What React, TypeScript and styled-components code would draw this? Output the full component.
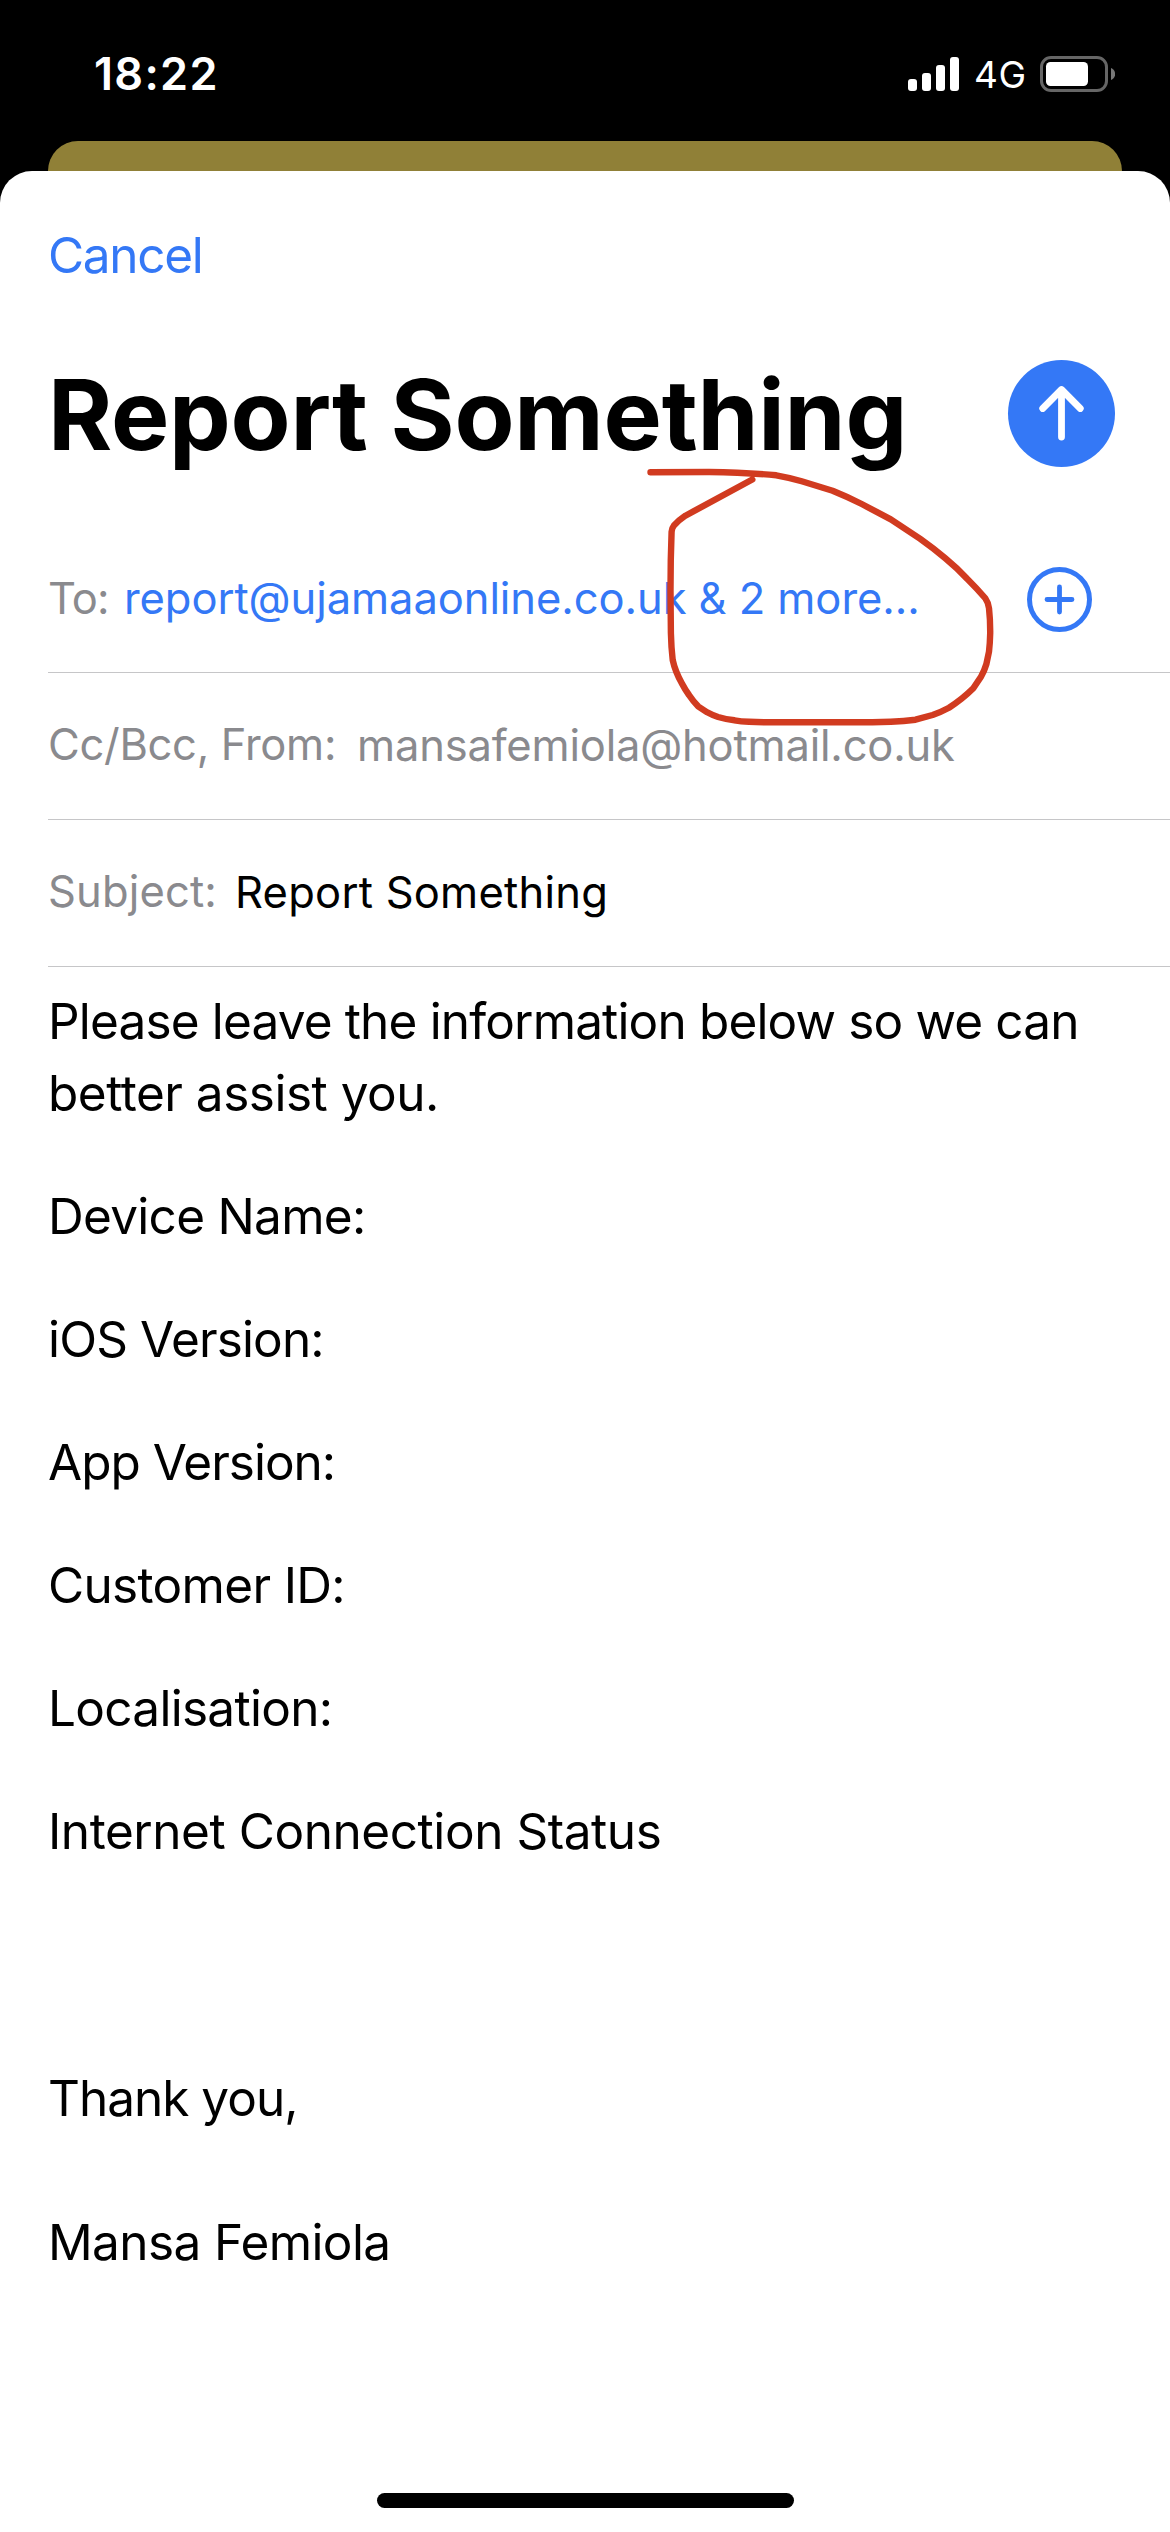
import React from "react";
import styled, { createGlobalStyle } from "styled-components";

const BLUE = "#3478f6";
const GREY = "#8a8a8e";

const GlobalStyle = createGlobalStyle`
  body {
    margin: 0;
    background: #000;
    font-family: Inter, "Liberation Sans", sans-serif;
    font-kerning: normal;
  }
  *, *::before, *::after { box-sizing: border-box; }
  p, h1 { margin: 0; }
`;

const Screen = styled.div`
  position: relative;
  display: flex;
  flex-direction: column;
  width: 1170px;
  height: 2532px;
  background: #000;
  overflow: hidden;
`;

const StatusBar = styled.header`
  display: flex;
  justify-content: space-between;
  align-items: flex-start;
  height: 141px;
  padding: 44px 55px 0 94px;
  color: #fff;
`;

const Clock = styled.time`
  font-size: 45px;
  font-weight: 600;
  line-height: 60px;
  letter-spacing: 1.3px;
`;

const Indicators = styled.div`
  display: flex;
  align-items: flex-start;
  padding-top: 12px;
`;

const Network = styled.span`
  width: 66px;
  margin-left: 15px;
  font-size: 37px;
  line-height: 37px;
  letter-spacing: 0.5px;
`;

const BackCard = styled.div`
  flex: none;
  height: 30px;
  margin: 0 48px;
  border-radius: 31px 31px 0 0;
  background: #908037;
`;

const Sheet = styled.main`
  flex: 1;
  display: flex;
  flex-direction: column;
  padding: 48px 0 0 48px;
  border-radius: 32px 32px 0 0;
  background: #fff;
`;

const CancelButton = styled.button`
  align-self: flex-start;
  padding: 0;
  border: 0;
  background: none;
  color: ${BLUE};
  font-family: inherit;
  font-size: 49.5px;
  line-height: 72px;
  letter-spacing: -1.3px;
`;

const TitleRow = styled.div`
  display: flex;
  justify-content: space-between;
  align-items: flex-start;
  height: 107px;
  margin: 69px 55px 59px 0;
`;

const Title = styled.h1`
  font-size: 98px;
  font-weight: 700;
  line-height: 109px;
  letter-spacing: -0.25px;
  white-space: nowrap;
`;

const RoundButton = styled.button<{ $size: number; $filled?: boolean }>`
  display: flex;
  flex: none;
  align-items: center;
  justify-content: center;
  width: ${(p) => p.$size}px;
  height: ${(p) => p.$size}px;
  padding: 0;
  border: ${(p) => (p.$filled ? "0" : `5px solid ${BLUE}`)};
  border-radius: 50%;
  background: ${(p) => (p.$filled ? BLUE : "transparent")};
  color: ${(p) => (p.$filled ? "#fff" : BLUE)};
`;

const FieldRow = styled.div`
  display: flex;
  align-items: flex-start;
  height: 147px;
  padding-right: 78px;
  border-bottom: 1px solid #c6c6c8;
  font-size: 43.5px;
  white-space: nowrap;
`;

const FieldLabel = styled.span<{ $width: number; $tracking: number; $line?: number }>`
  flex: none;
  width: ${(p) => p.$width}px;
  color: ${GREY};
  line-height: ${(p) => p.$line ?? 142}px;
  letter-spacing: ${(p) => p.$tracking}px;
`;

const FieldValue = styled.span<{ $color: string; $tracking: number }>`
  flex: 1;
  color: ${(p) => p.$color};
  line-height: 144px;
  letter-spacing: ${(p) => p.$tracking}px;
`;

const AddSlot = styled.div`
  display: flex;
  align-items: center;
  height: 147px;
`;

const MessageBody = styled.section`
  display: flex;
  flex-direction: column;
  padding-top: 18px;
  font-size: 49.5px;
  line-height: 72px;
  white-space: nowrap;
`;

const Line = styled.p<{ $tracking: number; $gap?: number }>`
  margin-top: ${(p) => p.$gap ?? 51}px;
  letter-spacing: ${(p) => p.$tracking}px;
`;

const Markup = styled.svg`
  position: absolute;
  left: 640px;
  top: 460px;
  pointer-events: none;
`;

const HomeIndicator = styled.div`
  position: absolute;
  left: 377px;
  bottom: 24px;
  width: 417px;
  height: 15px;
  border-radius: 8px;
  background: #000;
`;

const bodyLines: { text: string; tracking: number; gap?: number }[] = [
  { text: "Please leave the information below so we can", tracking: -0.84, gap: 0 },
  { text: "better assist you.", tracking: -0.49, gap: 0 },
  { text: "Device Name:", tracking: -0.71 },
  { text: "iOS Version:", tracking: -0.85 },
  { text: "App Version:", tracking: -1 },
  { text: "Customer ID:", tracking: -0.67 },
  { text: "Localisation:", tracking: -0.71 },
  { text: "Internet Connection Status", tracking: -0.44 },
  { text: "Thank you,", tracking: -1, gap: 195 },
  { text: "Mansa Femiola", tracking: -0.62, gap: 72 },
];

const SignalIcon = () => (
  <svg width="51" height="36" viewBox="0 0 51 36" fill="#fff">
    <rect x="0" y="23" width="9" height="12" rx="3" />
    <rect x="14" y="17" width="9" height="18" rx="3" />
    <rect x="28" y="9" width="9" height="26" rx="3" />
    <rect x="42" y="1" width="9" height="34" rx="3" />
  </svg>
);

const BatteryIcon = () => (
  <svg width="75" height="36" viewBox="0 0 75 36">
    <rect x="1.5" y="1.5" width="65" height="33" rx="9.5" fill="none" stroke="#666" strokeWidth="3" />
    <rect x="6" y="6" width="42" height="24" rx="4.5" fill="#fff" />
    <path d="M71 12c2.6 1 4.2 3.3 4.2 6s-1.600 5-4.200 6z" fill="#777" />
  </svg>
);

const ArrowUpIcon = () => (
  <svg width="107" height="107" viewBox="0 0 107 107" fill="none" stroke="currentColor" strokeWidth="6.800" strokeLinecap="round" strokeLinejoin="round">
    <path d="M53.500 30V77M34.700 48.500L53.500 29.500L72.300 48.500" />
  </svg>
);

const PlusIcon = () => (
  <svg width="31" height="31" viewBox="0 0 31 31" stroke="currentColor" strokeWidth="4.800" strokeLinecap="round">
    <path d="M15.500 3V28M3 15.500H28" />
  </svg>
);

export default function App() {
  return (
    <>
      <GlobalStyle />
      <Screen>
        <StatusBar>
          <Clock>18:22</Clock>
          <Indicators>
            <SignalIcon />
            <Network>4G</Network>
            <BatteryIcon />
          </Indicators>
        </StatusBar>
        <BackCard />
        <Sheet>
          <CancelButton>Cancel</CancelButton>
          <TitleRow>
            <Title>Report Something</Title>
            <RoundButton $size={107} $filled aria-label="Send">
              <ArrowUpIcon />
            </RoundButton>
          </TitleRow>
          <FieldRow>
            <FieldLabel $width={76} $tracking={-0.9} $line={144}>To:</FieldLabel>
            <FieldValue $color={BLUE} $tracking={-0.07}>report@ujamaaonline.co.uk &amp; 2 more...</FieldValue>
            <AddSlot>
              <RoundButton $size={65} aria-label="Add contact">
                <PlusIcon />
              </RoundButton>
            </AddSlot>
          </FieldRow>
          <FieldRow>
            <FieldLabel $width={309} $tracking={-0.3}>Cc/Bcc, From:</FieldLabel>
            <FieldValue $color={GREY} $tracking={-0.19}>mansafemiola@hotmail.co.uk</FieldValue>
          </FieldRow>
          <FieldRow>
            <FieldLabel $width={187} $tracking={0.15}>Subject:</FieldLabel>
            <FieldValue $color="#000" $tracking={0.24}>Report Something</FieldValue>
          </FieldRow>
          <MessageBody>
            {bodyLines.map((line) => (
              <Line key={line.text} $tracking={line.tracking} $gap={line.gap}>
                {line.text}
              </Line>
            ))}
          </MessageBody>
        </Sheet>
        <Markup width="360" height="270" viewBox="640 460 360 270" fill="none" stroke="#d13b20" strokeWidth="6.400" strokeLinecap="round" strokeLinejoin="round">
          <path d="M650.500 472.300L709 472Q745 472.500 776.300 475.300Q789 477.500 801.700 481.300L832.600 490.700Q847 496.500 861.700 504L890.800 519.300L919.900 538.700Q933 548 945.300 558.300Q957 568 967.100 578.700Q977 588.500 985.300 598.300Q988.500 603 989 608.300Q990.300 620 990.200 633.300Q990 643 989 651.700L986.400 664Q984.500 670.500 981 676.700L973.300 688.300Q962 699.500 949 707.700Q941 712 932.600 715L915.500 719.700Q904 721 890.800 721.700Q872 722.300 854.500 722.300H770Q758 722.300 749 721.700Q741 721.500 734.500 720.300Q726 719.300 718.100 717Q712 715 707.200 712.300L698.100 706.300Q693 701 689 695Q685 689.500 681.800 683.300Q678.600 677.500 676.300 671.700Q674 666 672.700 660Q671.200 647 670.900 633.300L670.500 590Q670.500 560 671.600 531.700Q671.900 528 673.800 525.700Q678.500 520.300 685.400 515.700Q718 498 752.300 479.500" />
        </Markup>
        <HomeIndicator />
      </Screen>
    </>
  );
}
